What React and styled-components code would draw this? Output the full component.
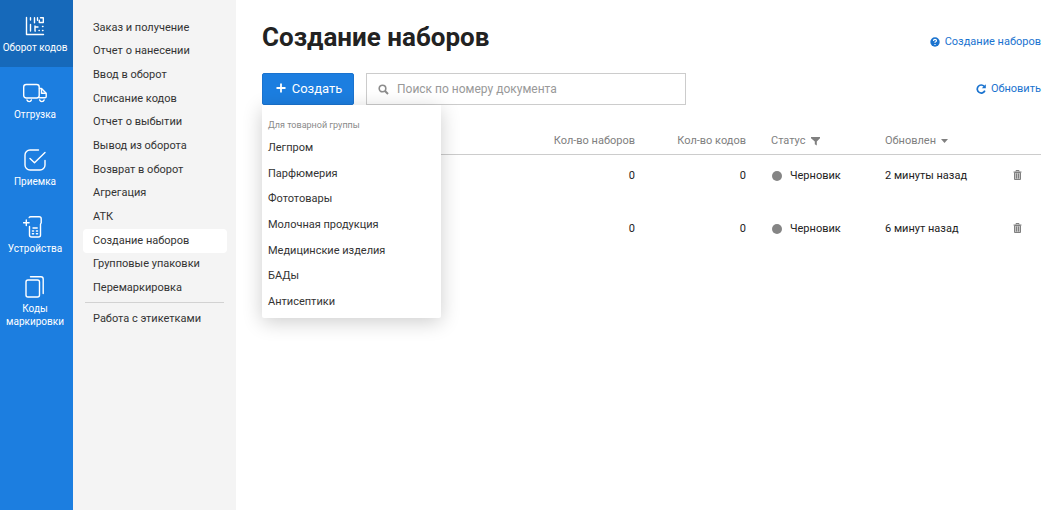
import React from "react";
import styled, { createGlobalStyle } from "styled-components";

const GlobalStyle = createGlobalStyle`
  *{
    box-sizing:border-box;
  }
  body{
    margin:0;
    background:#fff;
    color:#333;
    font-family:Roboto, "Liberation Sans", sans-serif;
    font-size:12px;
    line-height:16px;
  }
  button, input{
    font-family:inherit;
  }
  svg{
    display:block;
    flex-shrink:0;
  }
`

const Page = styled.div`
  display:flex;
  min-height:100vh;
`

const Nav = styled.nav`
  flex:0 0 73px;
  background:#1c7ee0;
`
const NavLink = styled.a`
  display:flex;
  flex-direction:column;
  align-items:center;
  justify-content:center;
  gap:3px;
  min-height:67px;
  padding-right:3px;
  background:${(p) => (p.$active ? "#1669ba" : "transparent")};
  color:#fff;
  font-size:10px;
  line-height:13px;
  text-align:center;
  text-decoration:none;
`

const Side = styled.aside`
  flex:0 0 163px;
  padding:16px 9px 16px 10px;
  background:#f4f4f4;
`
const SideList = styled.ul`
  display:grid;
  grid-auto-rows:1fr;
  height:${(p) => p.$height};
  margin:0;
  padding:0;
  list-style:none;
`
const SideLink = styled.a`
  display:flex;
  align-items:center;
  height:100%;
  padding:0 10px;
  border-radius:4px;
  background:${(p) => (p.$active ? "#fff" : "transparent")};
  color:#333;
  font-size:11px;
  text-decoration:none;
`
const Divider = styled.hr`
  margin:2px 3px 4px 2px;
  border:0;
  border-top:1px solid #d2d2d2;
`

const Main = styled.main`
  flex:1;
  min-width:0;
  padding:20px 18px 20px 26px;
`
const Header = styled.header`
  display:flex;
  justify-content:space-between;
  align-items:flex-end;
`
const Title = styled.h1`
  margin:0;
  color:#222;
  font-size:26px;
  font-weight:700;
  line-height:34px;
`
const Toolbar = styled.div`
  display:flex;
  align-items:center;
  gap:12px;
  margin-top:19px;
`
const IconLink = styled.a`
  display:flex;
  align-items:center;
  gap:5px;
  margin-left:auto;
  color:#1a73cf;
  font-size:11px;
  text-decoration:none;
`
const HelpLink = styled(IconLink)`
  padding-bottom:4px;
`
const MenuAnchor = styled.div`
  position:relative;
`
const CreateButton = styled.button`
  display:flex;
  align-items:center;
  justify-content:center;
  gap:6px;
  width:92px;
  height:32px;
  padding:0 0 2px 2px;
  border:1px solid #1a73cf;
  border-radius:2px;
  background:#1c7ee0;
  color:#fff;
  font-size:13px;
`
const Menu = styled.div`
  position:absolute;
  top:100%;
  left:0;
  z-index:1;
  width:179px;
  padding:12px 0 4px;
  border-radius:0 0 2px 2px;
  background:#fff;
  box-shadow:0 4px 20px rgba(0,0,0,0.2);
`
const MenuTitle = styled.div`
  padding:0 6px 2px;
  color:#8a8a8a;
  font-size:9px;
`
const MenuList = styled.ul`
  display:grid;
  grid-auto-rows:1fr;
  height:179px;
  margin:0;
  padding:0;
  list-style:none;
`
const MenuItem = styled.button`
  width:100%;
  height:100%;
  padding:0 6px;
  border:0;
  background:none;
  color:#333;
  font-size:11px;
  text-align:left;
`
const Search = styled.label`
  display:flex;
  align-items:center;
  gap:8px;
  flex:0 1 320px;
  height:32px;
  padding:0 11px;
  border:1px solid #ccc;
  color:#8c8c8c;
`
const SearchInput = styled.input`
  flex:1;
  min-width:0;
  padding:0;
  border:0;
  outline:none;
  background:none;
  color:#333;
  font-size:12px;
  &::placeholder{
    color:#999;
    opacity:1;
  }
`

const Table = styled.table`
  width:100%;
  margin-top:24px;
  border-collapse:collapse;
  table-layout:fixed;
  font-size:11px;
`
const Th = styled.th`
  width:${(p) => p.$width || "auto"};
  height:25px;
  padding:0 0 0 ${(p) => p.$indent || "0"};
  border-bottom:1px solid #ccc;
  color:#808080;
  font-weight:400;
  text-align:${(p) => p.$align || "left"};
`
const Td = styled.td`
  height:54px;
  padding:13px 0 0 ${(p) => p.$indent || "0"};
  color:#222;
  text-align:${(p) => p.$align || "left"};
  vertical-align:top;
`
const Inline = styled.span`
  display:flex;
  align-items:center;
  gap:${(p) => p.$gap || "5px"};
`
const Dot = styled.span`
  width:10px;
  height:10px;
  margin-left:1px;
  border-radius:50%;
  background:#858585;
`
const TrashButton = styled.button`
  display:flex;
  align-items:center;
  height:14px;
  padding:0;
  border:0;
  background:none;
  color:#808080;
`

const NavSvg = ({ children }) => (
  <svg width="24" height="24" viewBox="0 0 24 24" fill="none" stroke="#fff" strokeWidth="1.4" strokeLinecap="round" strokeLinejoin="round" aria-hidden="true">
    {children}
  </svg>
)

const CodesIcon = () => (
  <NavSvg>
    <path d="M3.5 3.5v17h17" />
    <path d="M7.500 3.700v2.300M7.500 10.500v6.500M11.500 3.700v5M14.500 3.700v2.500M20.300 8.500h-4v-2.300M17.500 3.700h2.800v4.800M12 12v5M12 13h3M12 17h.3M16 16.500h.3M19.500 12.500h.5M19.500 16.500h.5" />
  </NavSvg>
)
const TruckIcon = () => (
  <NavSvg>
    <rect x="0.700" y="3.500" width="15.500" height="13.500" rx="2.500" />
    <path d="M16.500 7.500h2l4.700 4.700v3.300q0 1.200-1.200 1.200h-5.500" />
    <path d="M18.500 7.800v4.400h4.200" />
    <path d="M4 19a2.300 2.300 0 0 0 4.400 0M16.700 19a2.300 2.300 0 0 0 4.400 0" />
  </NavSvg>
)
const AcceptIcon = () => (
  <NavSvg>
    <path d="M15.500 2h-8.500a5 5 0 0 0-5 5v10a5 5 0 0 0 5 5h10a5 5 0 0 0 5-5v-4.500" />
    <path d="M7 10.500l4.500 4.200L22 4.500" />
  </NavSvg>
)
const DeviceIcon = () => (
  <NavSvg>
    <path d="M6.200 2.500q.4-.8 1.500-.8h8.500q2 0 2 2v4l-.7 1.500v10.800q0 2-2 2h-7q-2 0-2-2v-8.500" />
    <path d="M3.300 5v5.500M0.500 7.700h5.600M10 13h4.200" />
    <path d="M9.500 16h1M13.500 16h1M9.500 18.700h1M13.500 18.700h1" strokeWidth="1.600" />
  </NavSvg>
)
const CopyIcon = () => (
  <NavSvg>
    <rect x="3" y="5" width="13.500" height="17" rx="2" />
    <path d="M7.500 1.800h10.500q2.200 0 2.200 2.200v14.500" />
  </NavSvg>
)
const PlusIcon = () => (
  <svg width="10" height="10" viewBox="0 0 10 10" stroke="currentColor" strokeWidth="1.800" aria-hidden="true">
    <path d="M5 0.500v9M0.500 5h9" />
  </svg>
)
const SearchIcon = () => (
  <svg width="11" height="11" viewBox="0 0 11 11" fill="none" stroke="currentColor" aria-hidden="true">
    <circle cx="4.500" cy="4.500" r="3.300" strokeWidth="1.600" />
    <path d="M7 7l3 3" strokeWidth="2" />
  </svg>
)
const HelpIcon = () => (
  <svg width="10" height="10" viewBox="0 0 10 10" fill="none" aria-hidden="true">
    <circle cx="5" cy="5" r="4.700" fill="#1a73cf" />
    <path d="M3.500 4q0-1.600 1.500-1.600t1.500 1.300q0 .800-1.500 1.500v.600M5 6.900v1" stroke="#fff" strokeWidth="1.200" />
  </svg>
)
const RefreshIcon = () => (
  <svg width="10" height="10" viewBox="0 0 10 10" fill="none" aria-hidden="true">
    <path d="M8.200 2.300a4 4 0 1 0 .700 4.400" stroke="#1a73cf" strokeWidth="1.700" />
    <path d="M9.800 0.300v4h-4z" fill="#1a73cf" />
  </svg>
)
const FilterIcon = () => (
  <svg width="9" height="9" viewBox="0 0 9 9" fill="#808080" aria-hidden="true">
    <path d="M0 0h9v1.200l-3.200 3.300v4l-2-1.200v-2.800l-3.800-3.300z" />
  </svg>
)
const SortIcon = () => (
  <svg width="7" height="4" viewBox="0 0 7 4" fill="#808080" aria-hidden="true">
    <path d="M0 0h7l-3.500 4z" />
  </svg>
)
const TrashIcon = () => (
  <svg width="9" height="10" viewBox="0 0 9 10" fill="none" stroke="currentColor" aria-hidden="true">
    <path d="M1.500 2.500h6v7h-6z" fill="#c4c4c4" />
    <path d="M3 1.500v-1h3v1M0.500 2h8M3.500 3.500v5M5.500 3.500v5" />
  </svg>
)

const sections = [
  { label: "Оборот кодов", icon: <CodesIcon />, active: true },
  { label: "Отгрузка", icon: <TruckIcon /> },
  { label: "Приемка", icon: <AcceptIcon /> },
  { label: "Устройства", icon: <DeviceIcon /> },
  { label: "Коды маркировки", icon: <CopyIcon /> },
]

const pages = [
  "Заказ и получение",
  "Отчет о нанесении",
  "Ввод в оборот",
  "Списание кодов",
  "Отчет о выбытии",
  "Вывод из оборота",
  "Возврат в оборот",
  "Агрегация",
  "АТК",
  "Создание наборов",
  "Групповые упаковки",
  "Перемаркировка",
]

const groups = [
  "Легпром",
  "Парфюмерия",
  "Фототовары",
  "Молочная продукция",
  "Медицинские изделия",
  "БАДы",
  "Антисептики",
]

const rows = [
  { sets: 0, codes: 0, status: "Черновик", updated: "2 минуты назад" },
  { sets: 0, codes: 0, status: "Черновик", updated: "6 минут назад" },
]

const App = () => {
  return (
    <Page>
      <GlobalStyle />
      <Nav>
        {sections.map((item) => (
          <NavLink href="#" key={item.label} $active={item.active}>
            {item.icon}
            {item.label}
          </NavLink>
        ))}
      </Nav>
      <Side>
        <SideList $height="284px">
          {pages.map((page) => (
            <li key={page}>
              <SideLink href="#" $active={page === "Создание наборов"}>{page}</SideLink>
            </li>
          ))}
        </SideList>
        <Divider />
        <SideList $height="24px">
          <li><SideLink href="#">Работа с этикетками</SideLink></li>
        </SideList>
      </Side>
      <Main>
        <Header>
          <Title>Создание наборов</Title>
          <HelpLink href="#"><HelpIcon />Создание наборов</HelpLink>
        </Header>
        <Toolbar>
          <MenuAnchor>
            <CreateButton type="button"><PlusIcon />Создать</CreateButton>
            <Menu>
              <MenuTitle>Для товарной группы</MenuTitle>
              <MenuList>
                {groups.map((group) => (
                  <li key={group}><MenuItem type="button">{group}</MenuItem></li>
                ))}
              </MenuList>
            </Menu>
          </MenuAnchor>
          <Search>
            <SearchIcon />
            <SearchInput type="text" placeholder="Поиск по номеру документа" />
          </Search>
          <IconLink href="#"><RefreshIcon />Обновить</IconLink>
        </Toolbar>
        <Table>
          <thead>
            <tr>
              <Th />
              <Th $width="115px" $align="right">Кол-во наборов</Th>
              <Th $width="111px" $align="right">Кол-во кодов</Th>
              <Th $width="139px" $indent="25px"><Inline>Статус<FilterIcon /></Inline></Th>
              <Th $width="128px"><Inline>Обновлен<SortIcon /></Inline></Th>
              <Th $width="28px" />
            </tr>
          </thead>
          <tbody>
            {rows.map((row) => (
              <tr key={row.updated}>
                <Td />
                <Td $align="right">{row.sets}</Td>
                <Td $align="right">{row.codes}</Td>
                <Td $indent="25px"><Inline $gap="8px"><Dot />{row.status}</Inline></Td>
                <Td>{row.updated}</Td>
                <Td><TrashButton type="button" aria-label="Удалить"><TrashIcon /></TrashButton></Td>
              </tr>
            ))}
          </tbody>
        </Table>
      </Main>
    </Page>
  );
}

export default App;
